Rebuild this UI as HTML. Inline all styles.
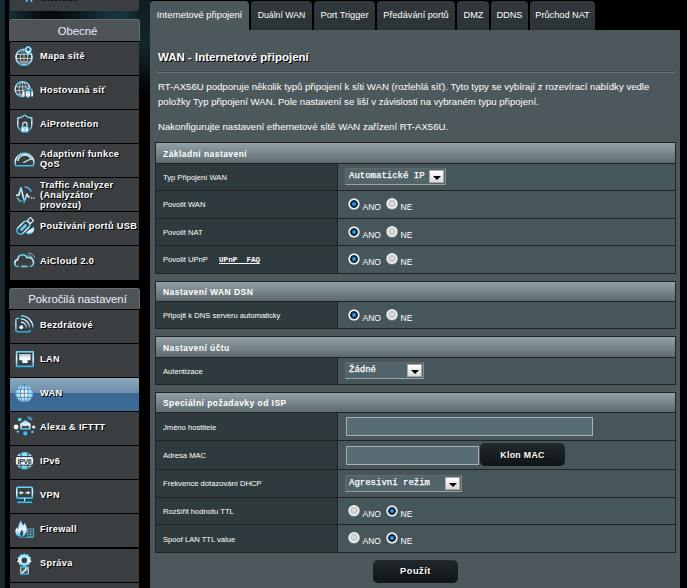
<!DOCTYPE html>
<html><head><meta charset="utf-8">
<style>
*{box-sizing:border-box;margin:0;padding:0}
html,body{width:687px;height:588px;overflow:hidden}
#root{position:relative;width:687px;height:588px;overflow:hidden}
body{position:relative;background:#000;font-family:"Liberation Sans",sans-serif;color:#fff}
.a{position:absolute}
#lstrip{left:0;top:0;width:5px;height:588px;background:linear-gradient(90deg,#1b2c34,#16242b)}
#gut{left:139px;top:0;width:12px;height:110px;background:linear-gradient(180deg,#0f1d22 0,#13272e 45px,#000 95px)}
#topbg{left:9px;top:0;width:131px;height:20px;background:linear-gradient(90deg,#163038 0,#0b161a 22px,#04080a 40px,#0a1519 65px,#15303a 95px,#173540 115px,#0f2127 131px)}
.hdr{left:9px;width:131px;background:#4e5457;border-radius:4px 4px 0 0;font-size:11.3px;color:#eef;text-align:center;padding-left:6px;box-shadow:inset -1px 0 0 #666c6f,inset 0 1px 0 #686d70}
.it{left:10px;width:129px;height:33px;background:#3a3e40}
.it .t{position:absolute;left:30px;white-space:nowrap;font-weight:bold;font-size:9.2px;letter-spacing:.33px;color:#fff;text-shadow:1px 1px 0 #000;line-height:10px}
.it svg{position:absolute;left:0;top:0;width:30px;height:33px;overflow:visible}
.act{background:linear-gradient(180deg,#8ba6bc 0,#6e8eaa 15px,#3a6793 15px,#3c6b97 100%)}
#panel{left:150px;top:30px;width:530px;height:560px;background:#4d585c}
.tab{top:1px;height:29px;background:linear-gradient(180deg,#323a3d,#2a3235);border-radius:4px 4px 0 0;font-size:9.2px;color:#fff;text-align:center;line-height:29px}
.tab.on{background:#4d585c;line-height:27px}
.title{left:158px;top:51px;font-weight:bold;font-size:11.5px;color:#fff;text-shadow:1px 1px 0 #000}
.sep{left:158px;top:72px;width:516px;height:1px;background:#6a777c;box-shadow:0 -1px 0 #3f494d}
.desc{left:158px;font-size:9.6px;color:#fff;white-space:nowrap}
.tbl{left:155px;width:521px;border:1px solid #222;background:#222}
.th{position:absolute;left:0;width:519px;height:20px;background:linear-gradient(180deg,#93a0a5,#5d6a6f);font-weight:bold;font-size:8.5px;letter-spacing:.45px;color:#fff;padding-left:7px;line-height:22px}
.row{position:absolute;left:0;width:519px}
.lb{position:absolute;left:0;top:0;bottom:0;width:181px;background:#2e3a3e}
.vl{position:absolute;left:182px;top:0;bottom:0;right:0;background:#47565b}
.lt{position:absolute;left:7px;font-size:8px;color:#fff;transform:scaleX(.95);transform-origin:0 0;white-space:nowrap}
.sel{position:absolute;height:17px;background:#50646a;border:1px solid;border-color:#6a6866 #8c8c8b #a39e99 #6a6866;-webkit-text-stroke:.25px #fff;font-family:"Liberation Mono",monospace;font-size:9px;color:#fff;padding-left:3px;line-height:15px}
.arr{position:absolute;right:1px;top:1px;width:15px;height:13px;background:linear-gradient(180deg,#fff,#d8d8d8);border:1px solid #aaa}
.arr:after{content:"";position:absolute;left:3px;top:5px;border-left:4px solid transparent;border-right:4px solid transparent;border-top:4px solid #000}
.rad{position:absolute;width:12px;height:12px;border-radius:50%;background:radial-gradient(circle at 50% 45%,#e2e3e4 0,#cfd1d2 2px,#bfc2c3 3.4px,#eeeeee 4.1px,#fbfbfb 4.9px,#7d878a 6px)}
.rad.on{background:radial-gradient(circle at 50% 50%,#7fc8f8 0,#2a8ad4 1px,#1b6cb0 1.8px,#0c2944 2.6px,#101e28 3.5px,#e8e8e8 4.1px,#f8f8f8 4.9px,#7d878a 6px)}
.rt{position:absolute;font-size:8.5px;color:#fff}
.inp{position:absolute;height:19px;background:#586d73;border:1px solid #a7b1b2}
.faq{position:absolute;left:59px;top:0;font-family:"Liberation Mono",monospace;font-weight:bold;font-size:8px;text-decoration:underline;transform:scaleX(1.0);transform-origin:0 0}
.btn{position:absolute;background:linear-gradient(180deg,#20292c,#101416);border-radius:5px;font-weight:bold;color:#fff;text-align:center;text-shadow:1px 1px 0 #000}
</style></head><body>
<svg width="0" height="0" style="position:absolute"><defs>
<linearGradient id="ig" x1="0" y1="0" x2="0" y2="1"><stop offset="0" stop-color="#5fd3fb"/><stop offset=".5" stop-color="#f4fbff"/><stop offset="1" stop-color="#34b9f0"/></linearGradient>
<linearGradient id="igf" x1="0" y1="0" x2="0" y2="1"><stop offset="0" stop-color="#63d4fb"/><stop offset=".55" stop-color="#f4fbff"/><stop offset="1" stop-color="#3dbdf2"/></linearGradient>
<radialGradient id="wanf" cx=".5" cy=".5" r=".5"><stop offset="0" stop-color="#ffffff"/><stop offset=".55" stop-color="#d8f6ff"/><stop offset=".85" stop-color="#7fd6f6"/><stop offset="1" stop-color="#6b9cc4"/></radialGradient>
</defs></svg>
<div id="root"><div class="a" id="lstrip"></div>
<div class="a" id="topbg"></div>
<div class="a" id="gut"></div>

<!-- SIDEBAR -->
<div class="a it" style="top:-22px;height:33px;border-radius:0 0 4px 4px;overflow:hidden"><div class="t" style="top:14px">Internet</div><svg viewBox="0 0 30 33"><path d="M16 20 L17 24 M20.5 21 L22 24" stroke="#5cd0f8" stroke-width="1.5"/></svg></div>
<div class="a hdr" style="top:19px;height:22px;line-height:24px">Obecné</div>
<div class="a it" style="top:42px;height:33px"><svg viewBox="0 0 30 33"><circle cx="14" cy="15.3" r="8" fill="none" stroke="url(#ig)" stroke-width="1.6"/>
<ellipse cx="14" cy="15.3" rx="3.6" ry="7.6" fill="none" stroke="#c9d3d7" stroke-width=".9"/>
<path d="M6.5 12.4H21.5M6.2 16.4H21.8M8 20H20M14 7.5V23" stroke="#c9d3d7" stroke-width=".9"/>
<path d="M18.2 14.8 L14.9 9.3 A3.7 3.7 0 1 1 21.5 9.3Z" fill="#3a3e40"/>
<path d="M18.2 13.8 L15.6 9.3 A3.1 3.1 0 1 1 20.8 9.3Z" fill="url(#igf)" stroke="#5fd3fb" stroke-width="1"/>
<circle cx="18.2" cy="7.5" r="1.5" fill="#3a3e40"/></svg><div class="t" style="top:9px">Mapa sítě</div></div>
<div class="a it" style="top:76px;height:33px"><svg viewBox="0 0 30 33"><circle cx="12.6" cy="13.3" r="7.5" fill="none" stroke="url(#ig)" stroke-width="1.4"/>
<ellipse cx="12.6" cy="13.3" rx="3.4" ry="7.2" fill="none" stroke="#c9d3d7" stroke-width=".85"/>
<path d="M5.6 10.8H19.6M5.2 14.6H14M6.5 18.2H13M12.6 6V20.5" stroke="#c9d3d7" stroke-width=".85"/>
<rect x="13.8" y="13.5" width="10.5" height="9.5" fill="#3a3e40"/>
<path d="M15.6 15.3 Q15.6 14.5 16.4 14.5 H19.4 Q20.2 14.5 20.2 15.3 V20 L17.9 22.2 L15.6 20Z" fill="url(#igf)"/><circle cx="17.9" cy="12.7" r="1.3" fill="#5cd0f8"/>
<path d="M12.7 15.8 Q12.7 15.2 13.3 15.2 H14.6 V20.5 H13.3 Q12.7 20.5 12.7 19.9Z" fill="#e8f6fb"/><circle cx="14" cy="13.8" r=".95" fill="#5cd0f8"/>
<path d="M23.1 15.8 Q23.1 15.2 22.5 15.2 H21.2 V20.5 H22.5 Q23.1 20.5 23.1 19.9Z" fill="#e8f6fb"/><circle cx="21.8" cy="13.8" r=".95" fill="#5cd0f8"/></svg><div class="t" style="top:9px">Hostovaná síť</div></div>
<div class="a it" style="top:110px;height:33px"><svg viewBox="0 0 30 33"><path d="M14.8 4.9 C13.4 6.6 11 7.7 7.8 8 L7.8 15.5 C7.8 18 9.3 19.5 10.5 20.5 M14.8 4.9 C16.2 6.6 18.6 7.7 21.8 8 L21.8 15.5 C21.8 18 20.3 19.5 19.1 20.5" fill="none" stroke="url(#ig)" stroke-width="1.3"/>
<path d="M12.6 16.6 V14.5 A2.2 2.2 0 0 1 17 14.5 V16.6" fill="none" stroke="#c9dbe2" stroke-width="1.4"/>
<rect x="11.2" y="16.5" width="7.2" height="6" rx="1" fill="url(#igf)"/><rect x="14.3" y="18.5" width="1.1" height="2" fill="#89a"/></svg><div class="t" style="top:9px">AiProtection</div></div>
<div class="a it" style="top:144px;height:33px"><svg viewBox="0 0 30 33"><path d="M5.8 21.8 A9.3 9.3 0 1 1 23.2 21.8 Z" fill="none" stroke="url(#ig)" stroke-width="1.5"/>
<path d="M7.8 17 A7 7 0 0 1 21.5 16" fill="none" stroke="#dfeff4" stroke-width="1.7"/>
<path d="M13.3 18.6 L20 15.3" stroke="#cfe6ee" stroke-width="1.2"/></svg><div class="t" style="top:5px">Adaptivní funkce<br>QoS</div></div>
<div class="a it" style="top:178px;height:33px"><svg viewBox="0 0 30 33"><path d="M6 17.3 H8.8 L11 9.3 L14.2 23.5 L17 16.5 L18.5 19 H20" fill="none" stroke="url(#ig)" stroke-width="1.6"/>
<path d="M14.5 9 A7.5 7.5 0 0 1 21.3 13.8 M7 19.5 A7.5 7.5 0 0 0 11.8 23.5" fill="none" stroke="#49c2f0" stroke-width="1.5"/>
<rect x="21" y="19.3" width="1.4" height="1.4" fill="#cde"/><rect x="23.3" y="19.3" width="1.4" height="1.4" fill="#cde"/></svg><div class="t" style="top:2px">Traffic Analyzer<br>(Analyzátor<br>provozu)</div></div>
<div class="a it" style="top:212px;height:33px"><svg viewBox="0 0 30 33"><g transform="rotate(45 14 15)"><rect x="10.3" y="8.5" width="7.4" height="15" rx="3.6" fill="none" stroke="url(#ig)" stroke-width="1.5"/>
<rect x="12.6" y="11.5" width="2.8" height="8.5" rx="1.3" fill="#5cd0f8"/>
<rect x="11.8" y="3.7" width="4.4" height="4.3" fill="none" stroke="#e6f4f8" stroke-width="1.1"/></g>
<path d="M24.2 15.6 C24.3 20.5 21.5 22.3 19.2 22.3 C17.5 22.3 16.3 21.6 15.8 20.8 L22.5 15.5 C23.3 14.9 24.1 14.9 24.2 15.6Z" fill="url(#igf)"/></svg><div class="t" style="top:9px">Používání portů USB</div></div>
<div class="a it" style="top:246px;height:34px"><svg viewBox="0 0 30 33"><path d="M8.8 20.5 H7.6 C5.8 20.5 4.8 19 4.8 17.2 C4.8 15.2 6.2 14 7.6 13.8 C8 10.7 10.3 8.8 12.7 8.8 C14.6 8.8 16.2 9.8 17 11.6 C17.6 11.4 18.1 11.3 18.7 11.4 C21.2 11.6 23.5 13.6 23.5 16.6 C23.5 19 21.7 20.5 19.8 20.5 H19.5" fill="none" stroke="url(#ig)" stroke-width="1.6"/>
<rect x="11" y="19.6" width="6.6" height="1.7" fill="#8ac6de"/>
<path d="M18 7.2 A6 6 0 0 1 24.6 11.8 M18.5 9.6 A3.5 3.5 0 0 1 22.3 12.5" fill="none" stroke="#7fbcd4" stroke-width="1"/></svg><div class="t" style="top:10px">AiCloud 2.0</div></div>

<div class="a hdr" style="top:288px;height:21px;line-height:23px">Pokročilá nastavení</div>
<div class="a it" style="top:310px;height:33px"><svg viewBox="0 0 30 33"><path d="M9.6 8.4 H7.2 C6.4 8.4 5.9 8.9 5.9 9.7 V20.6 C5.9 21.4 6.4 21.9 7.2 21.9 H18.8 C19.6 21.9 20 21.4 20 20.6 V20" fill="none" stroke="url(#ig)" stroke-width="1.3"/>
<circle cx="11.3" cy="17.2" r="1.9" fill="#e0f6fc"/>
<path d="M11 12.3 A5 5 0 0 1 16.2 17.6 M11 9 A8.4 8.4 0 0 1 19.5 17.6 M11 5.8 A11.7 11.7 0 0 1 22.9 17.6" fill="none" stroke="url(#ig)" stroke-width="1.4"/></svg><div class="t" style="top:10px">Bezdrátové</div></div>
<div class="a it" style="top:344px;height:33px"><svg viewBox="0 0 30 33"><rect x="6.6" y="7.8" width="16.6" height="14.6" fill="none" stroke="url(#ig)" stroke-width="1.6"/>
<path d="M9.3 10.3 H20.5 V16.3 H17.6 V19 H12.2 V16.3 H9.3Z" fill="#f2fbff"/>
<path d="M11 10.5 V12.8 M12.8 10.5 V12.8 M14.9 10.5 V12.8 M17 10.5 V12.8 M18.9 10.5 V12.8" stroke="#7b95a2" stroke-width=".7"/></svg><div class="t" style="top:10px">LAN</div></div>
<div class="a it act" style="top:378px;height:33px"><svg viewBox="0 0 30 33"><circle cx="14.3" cy="15.3" r="9" fill="url(#wanf)"/>
<ellipse cx="14.3" cy="15.3" rx="4" ry="8.8" fill="none" stroke="#4f7fae" stroke-width=".9"/>
<path d="M6 11.3 H22.6 M5.3 15.3 H23.3 M6 19.3 H22.6 M14.3 6.5 V24.1" stroke="#4f7fae" stroke-width=".9"/></svg><div class="t" style="top:10px">WAN</div></div>
<div class="a it" style="top:412px;height:33px"><svg viewBox="0 0 30 33"><path d="M10.2 11.5 L15.3 8 L20.6 11.5 V17.8 H10.2Z" fill="url(#igf)"/>
<rect x="11.8" y="13.8" width="7.2" height="2.5" fill="#4a4e52"/>
<circle cx="6.1" cy="15" r="2.4" fill="#f4f8fa"/><circle cx="23.7" cy="15" r="1.6" fill="#f4f8fa"/>
<circle cx="15.3" cy="21.4" r="2.1" fill="#3ac0f2"/><circle cx="9.7" cy="7.6" r="1.9" fill="#5cd0f8"/>
<circle cx="7.9" cy="19.6" r="1.2" fill="#5cd0f8"/><circle cx="22.4" cy="19.9" r="1.2" fill="#5cd0f8"/>
<ellipse cx="19.9" cy="6.4" rx="3" ry="1.5" transform="rotate(30 19.9 6.4)" fill="#4f8ea8"/></svg><div class="t" style="top:10px">Alexa &amp; IFTTT</div></div>
<div class="a it" style="top:446px;height:33px"><svg viewBox="0 0 30 33"><circle cx="14.5" cy="14.8" r="8.8" fill="url(#igf)"/>
<path d="M6 10.5 H23 M6 19.2 H23 M11 6.5 V23 M18 6.5 V23" stroke="#3a3e40" stroke-width="1"/>
<rect x="6.4" y="11.5" width="16.2" height="6.7" fill="#eef7fa"/>
<text x="14.6" y="17.8" text-anchor="middle" font-family="Liberation Sans" font-weight="bold" font-size="7" fill="#2a3033" textLength="14">IPV6</text></svg><div class="t" style="top:10px">IPv6</div></div>
<div class="a it" style="top:480px;height:33px"><svg viewBox="0 0 30 33"><rect x="6.8" y="7.3" width="15.6" height="10.8" rx="1.2" fill="none" stroke="url(#ig)" stroke-width="1.6"/>
<path d="M8.8 12.7 L11.3 10.7 V14.7Z M20.3 12.7 L17.8 10.7 V14.7Z" fill="#d4f4fc"/><path d="M11 12.7 H13.5 M15.6 12.7 H18" stroke="#d4f4fc" stroke-width="1.4"/>
<path d="M14.6 18 V21.5" stroke="#cfe8f0" stroke-width="1.2"/><path d="M7.3 22.3 H22" stroke="#3ac0f2" stroke-width="1.6"/></svg><div class="t" style="top:10px">VPN</div></div>
<div class="a it" style="top:514px;height:33px"><svg viewBox="0 0 30 33"><path d="M9.5 22.5 C6 22 5 18.5 5.5 16 C6 14.5 6.8 13.5 7.3 13 C7.3 14.5 7.7 15 8.3 15.3 C8.3 12 9 8.5 11.3 6.3 C11.3 8.5 12.3 10.5 13.5 11.3 C14 10.3 14.2 9.5 14.5 8.8 C16.3 10.8 17 14 16.7 17 C16.3 20.3 14.5 22 12.8 22.5Z" fill="url(#igf)"/>
<path d="M11.4 22 C10 21.5 9.8 19.8 10.5 18.5 C11 17.5 11.5 16.5 11.7 15.6 C12.7 17 13.3 18.3 13.1 20 C12.9 21 12.4 21.8 11.4 22Z" fill="#3a3e40"/>
<rect x="17.6" y="15" width="6" height="7.8" fill="none" stroke="#4ab0d8" stroke-width="1"/><path d="M17.6 17.6 H23.6 M17.6 20.2 H23.6 M20.6 15 V22.8" stroke="#6aaac2" stroke-width=".8"/>
<path d="M9 23.4 H23.6" stroke="#3a9ec8" stroke-width="1"/></svg><div class="t" style="top:10px">Firewall</div></div>
<div class="a it" style="top:549px;height:33px"><svg viewBox="0 0 30 33"><g transform="translate(14.3 11.3) scale(1.22) translate(-14.3 -11.3)"><path d="M14.3 5.5 L15.6 6.7 L17.5 6.3 L18 8.1 L19.8 9 L19.2 10.8 L20.2 12.4 L18.6 13.5 L18.3 15.3 L16.4 15.2 L15.2 16.6 L14.3 16.8 L13.4 16.6 L12.2 15.2 L10.3 15.3 L10 13.5 L8.4 12.4 L9.4 10.8 L8.8 9 L10.6 8.1 L11.1 6.3 L13 6.7Z" fill="url(#igf)"/>
<circle cx="14.3" cy="11.3" r="2.3" fill="#3a3e40"/></g>
<rect x="10.2" y="17.5" width="8.6" height="8.2" fill="url(#igf)"/><rect x="11.2" y="18.5" width="6.6" height="6.2" fill="#46606a"/><path d="M11.8 24.2 L16.6 19.6" stroke="#f0fafc" stroke-width="1.5"/><circle cx="16.4" cy="19.9" r="1.3" fill="#e8f6fb"/><circle cx="16.4" cy="19.9" r=".5" fill="#46606a"/></svg><div class="t" style="top:9px">Správa</div></div>
<div class="a it" style="top:583px;height:33px"><svg viewBox="0 0 30 33"></svg><div class="t" style="top:9px"></div></div>


<!-- MAIN -->
<div class="a" id="panel"></div>
<div class="a tab on" style="left:150px;width:99px;font-size:9.4px">Internetové připojení</div>
<div class="a tab" style="left:251px;width:61px;font-size:8.7px">Duální WAN</div>
<div class="a tab" style="left:314px;width:61px">Port Trigger</div>
<div class="a tab" style="left:377px;width:78px">Předávání portů</div>
<div class="a tab" style="left:457px;width:32px;padding-left:1px">DMZ</div>
<div class="a tab" style="left:491px;width:37px">DDNS</div>
<div class="a tab" style="left:530px;width:65px">Průchod NAT</div>

<div class="a title">WAN - Internetové připojení</div>
<div class="a sep"></div>
<div class="a desc" style="top:81px">RT-AX56U podporuje několik typů připojení k síti WAN (rozlehlá síť). Tyto typy se vybírají z rozevírací nabídky vedle</div>
<div class="a desc" style="top:96px">položky Typ připojení WAN. Pole nastavení se liší v závislosti na vybraném typu připojení.</div>
<div class="a desc" style="top:121px">Nakonfigurujte nastavení ethernetové sítě WAN zařízení RT-AX56U.</div>
<div class="a tbl" style="top:142px;height:132px"><div class="th" style="top:0;height:20px;line-height:22px">Základní nastavení</div><div class="row" style="top:21px;height:26px"><div class="lb"><span class="lt" style="top:9px">Typ Připojení WAN</span></div><div class="vl"><div class="sel" style="left:7px;top:4px;width:101px">Automatické IP<div class="arr"></div></div></div></div><div class="row" style="top:48px;height:27px"><div class="lb"><span class="lt" style="top:9px">Povolit WAN</span></div><div class="vl"><div class="rad on" style="left:9.5px;top:6.5px"></div><span class="rt" style="left:24.5px;top:11px">ANO</span><div class="rad" style="left:48px;top:6.5px"></div><span class="rt" style="left:62.5px;top:11px">NE</span></div></div><div class="row" style="top:76px;height:26px"><div class="lb"><span class="lt" style="top:9px">Povolit NAT</span></div><div class="vl"><div class="rad on" style="left:9.5px;top:6.5px"></div><span class="rt" style="left:24.5px;top:11px">ANO</span><div class="rad" style="left:48px;top:6.5px"></div><span class="rt" style="left:62.5px;top:11px">NE</span></div></div><div class="row" style="top:103px;height:27px"><div class="lb"><span class="lt" style="top:9px">Povolit UPnP<span class="faq">UPnP&nbsp;&nbsp;FAQ</span></span></div><div class="vl"><div class="rad on" style="left:9.5px;top:6.5px"></div><span class="rt" style="left:24.5px;top:11px">ANO</span><div class="rad" style="left:48px;top:6.5px"></div><span class="rt" style="left:62.5px;top:11px">NE</span></div></div></div>
<div class="a tbl" style="top:281px;height:48px"><div class="th" style="top:0;height:19px;line-height:21px">Nastavení WAN DSN</div><div class="row" style="top:20px;height:26px"><div class="lb"><span class="lt" style="top:9px">Připojit k DNS serveru automaticky</span></div><div class="vl"><div class="rad on" style="left:9.5px;top:6.5px"></div><span class="rt" style="left:24.5px;top:11px">ANO</span><div class="rad" style="left:48px;top:6.5px"></div><span class="rt" style="left:62.5px;top:11px">NE</span></div></div></div>
<div class="a tbl" style="top:336px;height:49px"><div class="th" style="top:0;height:20px;line-height:22px">Nastavení účtu</div><div class="row" style="top:21px;height:26px"><div class="lb"><span class="lt" style="top:9px">Autentizace</span></div><div class="vl"><div class="sel" style="left:7px;top:4px;width:79px">Žádné<div class="arr"></div></div></div></div></div>
<div class="a tbl" style="top:392px;height:161px"><div class="th" style="top:0;height:19px;line-height:21px">Speciální požadavky od ISP</div><div class="row" style="top:20px;height:27px"><div class="lb"><span class="lt" style="top:10px">Jméno hostitele</span></div><div class="vl"><div class="inp" style="left:8px;top:4px;width:247px"></div></div></div><div class="row" style="top:48px;height:28px"><div class="lb"><span class="lt" style="top:10px">Adresa MAC</span></div><div class="vl"><div class="inp" style="left:8px;top:5px;width:133px"></div><div class="btn" style="left:142px;top:2px;width:85px;height:23px;line-height:24px;font-size:8.8px;letter-spacing:.3px">Klon MAC</div></div></div><div class="row" style="top:77px;height:27px"><div class="lb"><span class="lt" style="top:9px">Frekvence dotazování DHCP</span></div><div class="vl"><div class="sel" style="left:7px;top:5px;width:117px">Agresivní režim<div class="arr"></div></div></div></div><div class="row" style="top:105px;height:26px"><div class="lb"><span class="lt" style="top:9px">Rozšířit hodnotu TTL</span></div><div class="vl"><div class="rad" style="left:9.5px;top:6.5px"></div><span class="rt" style="left:24.5px;top:11px">ANO</span><div class="rad on" style="left:48px;top:6.5px"></div><span class="rt" style="left:62.5px;top:11px">NE</span></div></div><div class="row" style="top:132px;height:27px"><div class="lb"><span class="lt" style="top:10px">Spoof LAN TTL value</span></div><div class="vl"><div class="rad" style="left:9.5px;top:6.5px"></div><span class="rt" style="left:24.5px;top:11px">ANO</span><div class="rad on" style="left:48px;top:6.5px"></div><span class="rt" style="left:62.5px;top:11px">NE</span></div></div></div>
<div class="a btn" style="left:373px;top:560px;width:85px;height:23px;line-height:22px;font-size:9.3px;letter-spacing:.5px">Použít</div>

</div></body></html>
